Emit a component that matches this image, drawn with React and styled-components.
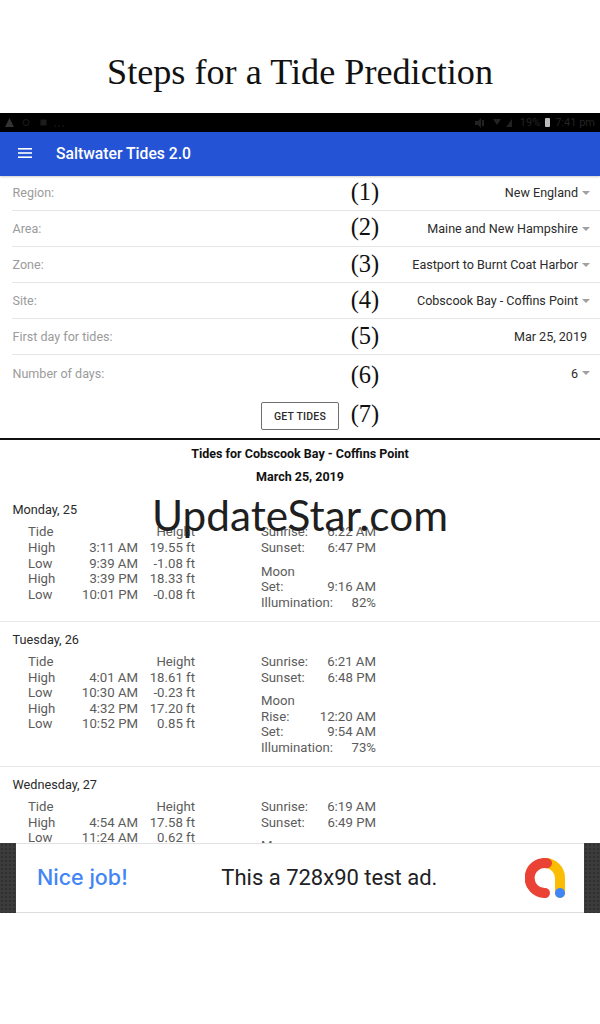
import React from "react";
import styled, { createGlobalStyle } from "styled-components";

const Global = createGlobalStyle`
  html, body { margin: 0; padding: 0; background: #fff; }
  body { font-family: Roboto, "Liberation Sans", sans-serif; }
`;

const Page = styled.div`
  position: relative;
  width: 600px;
  height: 1024px;
  overflow: hidden;
  background: #fff;
`;

const Heading = styled.h1`
  margin: 0;
  height: 113px;
  box-sizing: border-box;
  padding-top: 50px;
  text-align: center;
  font: 400 36.2px/44px "Liberation Serif", serif;
  color: #111;
`;

const StatusBar = styled.div`
  height: 19px;
  background: #000;
  display: flex;
  align-items: center;
  justify-content: space-between;
  padding: 0 5px;
  color: #242424;
  font-size: 11px;
`;

const StatusGroup = styled.div`
  display: flex;
  align-items: center;
  gap: ${(p) => p.$gap}px;
`;

const AppBar = styled.header`
  height: 44px;
  box-sizing: border-box;
  padding: 0 0 2px 18px;
  background: #2553d6;
  display: flex;
  align-items: center;
  gap: 24px;
  color: #fff;
  font-size: 15.7px;
  font-weight: 500;
  box-shadow: 0 1px 2px rgba(0, 0, 0, 0.2);
`;

const Form = styled.section`
  padding-left: 12px;
  border-bottom: 2px solid #111;
`;

const Row = styled.div`
  display: grid;
  grid-template-columns: 323px 60px 1fr;
  align-items: center;
  height: ${(p) => (p.$first ? 35 : 36)}px;
  box-sizing: border-box;
  border-bottom: ${(p) => (p.$plain ? "none" : "1px solid #e6e6e6")};
  font-size: 12.55px;
`;

const Label = styled.span`
  color: #9b9b9b;
  padding-left: 0.5px;
  margin-top: ${(p) => (p.$first ? -1 : 0)}px;
`;

const Marker = styled.span`
  font: 400 24.5px/30px "Liberation Serif", serif;
  color: #111;
  text-align: center;
  position: relative;
  top: ${(p) => p.$shift || 0}px;
`;

const Value = styled.span`
  display: flex;
  align-items: center;
  justify-content: flex-end;
  gap: 4px;
  padding-right: ${(p) => (p.$noCaret ? "13px" : "10px")};
  margin-top: ${(p) => (p.$first ? -1 : 0)}px;
  color: #2b2b2b;
  white-space: nowrap;
`;

const Caret = styled.i`
  width: 0;
  height: 0;
  border-left: 4px solid transparent;
  border-right: 4px solid transparent;
  border-top: 4px solid #a0a0a0;
`;

const ActionRow = styled.div`
  display: grid;
  grid-template-columns: 327px 52px;
  align-items: end;
  height: 47px;
  box-sizing: border-box;
  padding: 0 0 8px;
  justify-items: end;
`;

const ActionMarker = styled(Marker)`
  justify-self: center;
  top: -1px;
`;

const Button = styled.button`
  width: 78px;
  height: 28px;
  padding: 0;
  background: #fff;
  border: 1px solid #6f6f6f;
  border-radius: 2px;
  color: #2b2b2b;
  font: 500 10.5px Roboto, sans-serif;
  letter-spacing: 0.2px;
`;

const Results = styled.section`
  height: 403px;
  overflow: hidden;
  color: #5c5c5c;
  font-size: 13.2px;
  line-height: 15.6px;
`;

const ResultTitle = styled.div`
  text-align: center;
  color: #111;
  font-size: 12.5px;
  font-weight: 700;
  line-height: 16px;
  padding-top: ${(p) => p.$top}px;
`;

const Day = styled.article`
  padding: ${(p) => (p.$first ? 17 : 9.6)}px 0 10.6px 12px;
  border-bottom: 1px solid #e8e8e8;
`;

const DayName = styled.div`
  color: #2a2a2a;
  font-size: 12.7px;
  line-height: 16px;
  margin-bottom: 6.4px;
  padding-left: 0.5px;
`;

const DayBody = styled.div`
  display: flex;
  padding-left: 16px;
`;

const TideTable = styled.div`
  display: grid;
  grid-template-columns: 40px 70px 57px;
  width: 233px;
  align-content: start;
`;

const Cell = styled.span`
  text-align: ${(p) => (p.$right ? "right" : "left")};
  white-space: nowrap;
`;

const Astro = styled.div`
  width: 115px;
`;

const AstroRow = styled.div`
  display: flex;
  justify-content: space-between;
`;

const MoonTitle = styled.div`
  margin-top: 8px;
`;

const Ad = styled.aside`
  height: 70px;
  display: grid;
  grid-template-columns: 16px 1fr 16px;
  background: #fff;
`;

const AdSide = styled.div`
  background-color: #3c3c3c;
  background-image: radial-gradient(#303030 1px, transparent 1.2px);
  background-size: 4px 4px;
`;

const AdBody = styled.div`
  display: flex;
  align-items: center;
  justify-content: space-between;
  padding: 0 19px 0 21px;
  border-top: 1px solid #e2e2e2;
  border-bottom: 1px solid #dadce0;
`;

const AdLead = styled.span`
  color: #4285f4;
  font: 500 21.5px Inter, Roboto, sans-serif;
  padding-bottom: 2px;
`;

const AdText = styled.span`
  color: #202124;
  font: 400 22px Roboto, sans-serif;
  margin-left: 6px;
  padding-bottom: 2px;
`;

const Watermark = styled.div`
  position: absolute;
  left: 0;
  right: 0;
  top: 486px;
  text-align: center;
  font: 400 42.3px/58px Lato, "Open Sans", sans-serif;
  color: #1f1f1f;
  pointer-events: none;
`;

const Menu = () => (
  <svg width="14" height="12" viewBox="0 0 14 12" fill="#fff">
    <rect y="1" width="14" height="1.6" />
    <rect y="5.2" width="14" height="1.6" />
    <rect y="9.4" width="14" height="1.6" />
  </svg>
);

const AdLogo = () => (
  <svg width="40" height="40" viewBox="0 0 40 40" fill="none" strokeWidth="10" strokeLinecap="round">
    <path d="M20 5A15 15 0 0 1 35 20V35" stroke="#fbbc04" />
    <path d="M22 5.2A15 15 0 1 0 20 35" stroke="#ea4335" />
    <circle cx="35" cy="35" r="5" fill="#4285f4" />
  </svg>
);

const Warning = () => (
  <svg width="9" height="9" viewBox="0 0 9 9" fill="#333">
    <path d="M4.5 0l4.5 9H0z" />
  </svg>
);

const StatusDim = () => (
  <svg width="54" height="9" viewBox="0 0 54 9" fill="none" stroke="#1c1c1c">
    <circle cx="4" cy="4.5" r="3" />
    <rect x="19" y="2" width="5" height="5" fill="#1c1c1c" />
    <path d="M32 8h2M36 8h2M40 8h2" />
  </svg>
);

const StatusIcons = () => (
  <svg width="40" height="10" viewBox="0 0 40 10" fill="#222">
    <path d="M0 3h3l3-3v10L3 7H0zM7 2h2v6H7z" />
    <path d="M18 1h8l-4 6z" />
    <path d="M31 9l6-8v8z" />
  </svg>
);

const Battery = () => (
  <svg width="5" height="9" viewBox="0 0 5 9" fill="#bbb">
    <rect width="5" height="9" rx="1" />
  </svg>
);

const rows = [
  ["Region:", "(1)", "New England", true, -1],
  ["Area:", "(2)", "Maine and New Hampshire", true, -2],
  ["Zone:", "(3)", "Eastport to Burnt Coat Harbor", true, -1],
  ["Site:", "(4)", "Cobscook Bay - Coffins Point", true, -1],
  ["First day for tides:", "(5)", "Mar 25, 2019", false, -1],
  ["Number of days:", "(6)", "6", true, 2],
];

const days = [
  {
    name: "Monday, 25",
    tides: [["High", "3:11 AM", "19.55 ft"], ["Low", "9:39 AM", "-1.08 ft"], ["High", "3:39 PM", "18.33 ft"], ["Low", "10:01 PM", "-0.08 ft"]],
    sun: ["6:22 AM", "6:47 PM"],
    moon: [["Set:", "9:16 AM"], ["Illumination:", "82%"]],
  },
  {
    name: "Tuesday, 26",
    tides: [["High", "4:01 AM", "18.61 ft"], ["Low", "10:30 AM", "-0.23 ft"], ["High", "4:32 PM", "17.20 ft"], ["Low", "10:52 PM", "0.85 ft"]],
    sun: ["6:21 AM", "6:48 PM"],
    moon: [["Rise:", "12:20 AM"], ["Set:", "9:54 AM"], ["Illumination:", "73%"]],
  },
  {
    name: "Wednesday, 27",
    tides: [["High", "4:54 AM", "17.58 ft"], ["Low", "11:24 AM", "0.62 ft"]],
    sun: ["6:19 AM", "6:49 PM"],
    moon: [],
  },
];

export default function App() {
  return (
    <Page>
      <Global />
      <Heading>Steps for a Tide Prediction</Heading>
      <StatusBar>
        <StatusGroup $gap={8}>
          <Warning />
          <StatusDim />
        </StatusGroup>
        <StatusGroup $gap={5}>
          <StatusIcons />
          <span>19%</span>
          <Battery />
          <span>7:41 pm</span>
        </StatusGroup>
      </StatusBar>
      <AppBar>
        <Menu />
        <span>Saltwater Tides 2.0</span>
      </AppBar>
      <Form>
        {rows.map(([label, mark, value, caret, shift], i) => (
          <Row key={mark} $first={i === 0} $plain={i === rows.length - 1}>
            <Label $first={i === 0}>{label}</Label>
            <Marker $shift={shift}>{mark}</Marker>
            <Value $noCaret={!caret} $first={i === 0}>
              {value}
              {caret && <Caret />}
            </Value>
          </Row>
        ))}
        <ActionRow>
          <Button>GET TIDES</Button>
          <ActionMarker>(7)</ActionMarker>
        </ActionRow>
      </Form>
      <Results>
        <ResultTitle $top={6}>Tides for Cobscook Bay - Coffins Point</ResultTitle>
        <ResultTitle $top={7}>March 25, 2019</ResultTitle>
        {days.map((d, i) => (
          <Day key={d.name} $first={i === 0}>
            <DayName>{d.name}</DayName>
            <DayBody>
              <TideTable>
                <Cell>Tide</Cell>
                <Cell />
                <Cell $right>Height</Cell>
                {d.tides.flatMap((t) => [
                  <Cell key={t[1]}>{t[0]}</Cell>,
                  <Cell key={t[1] + "t"} $right>{t[1]}</Cell>,
                  <Cell key={t[1] + "h"} $right>{t[2]}</Cell>,
                ])}
              </TideTable>
              <Astro>
                <AstroRow><span>Sunrise:</span><span>{d.sun[0]}</span></AstroRow>
                <AstroRow><span>Sunset:</span><span>{d.sun[1]}</span></AstroRow>
                <MoonTitle>Moon</MoonTitle>
                {d.moon.map(([k, v]) => (
                  <AstroRow key={k}><span>{k}</span><span>{v}</span></AstroRow>
                ))}
              </Astro>
            </DayBody>
          </Day>
        ))}
      </Results>
      <Ad>
        <AdSide />
        <AdBody>
          <AdLead>Nice job!</AdLead>
          <AdText>This a 728x90 test ad.</AdText>
          <AdLogo />
        </AdBody>
        <AdSide />
      </Ad>
      <Watermark>UpdateStar.com</Watermark>
    </Page>
  );
}
